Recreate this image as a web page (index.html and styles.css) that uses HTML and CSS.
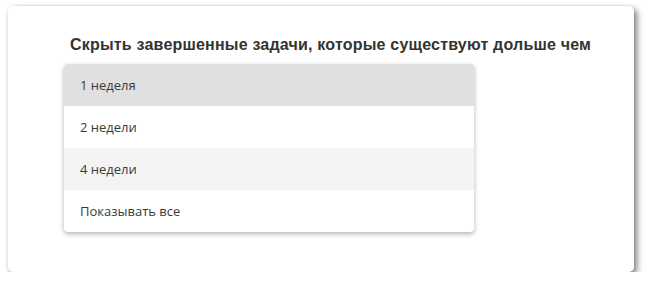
FILE: index.html
```html
<!DOCTYPE html>
<html lang="ru">
<head>
<meta charset="utf-8">
<link rel="stylesheet" href="styles.css">
</head>
<body>
<div class="card">
  <div class="title">Скрыть завершенные задачи, которые существуют дольше чем</div>
  <ul class="menu">
    <li class="item selected">1 неделя</li>
    <li class="item">2 недели</li>
    <li class="item hover">4 недели</li>
    <li class="item">Показывать все</li>
  </ul>
</div>
</body>
</html>
```
FILE: styles.css
```css
html, body {
  margin: 0;
  padding: 0;
  background: #ffffff;
}
body {
  padding: 6px 0 0 8px;
}
.card {
  box-sizing: border-box;
  width: 626px;
  height: 266px;
  background: #fff;
  border-radius: 5px;
  box-shadow: 3px 3px 6px rgba(0,0,0,0.5), 0 0 3px rgba(0,0,0,0.08);
  padding: 29px 0 0 56px;
}
.title {
  font-family: "Liberation Sans", Arial, sans-serif;
  font-weight: bold;
  font-size: 16px;
  line-height: 19px;
  letter-spacing: 0.2px;
  color: #333;
  margin-left: 6px;
  margin-bottom: 10px;
  white-space: nowrap;
}
.menu {
  list-style: none;
  margin: 0;
  padding: 0;
  width: 410px;
  border-radius: 4px;
  overflow: hidden;
  background: #fff;
  box-shadow: 0 2px 5px rgba(0,0,0,0.3);
}
.item {
  height: 42px;
  line-height: 42px;
  padding-left: 16px;
  font-family: "Open Sans", "Noto Sans", sans-serif;
  font-size: 13px;
  color: #3a3a3a;
}
.selected { background: #e0e0e0; }
.hover { background: #f4f4f4; }
```
